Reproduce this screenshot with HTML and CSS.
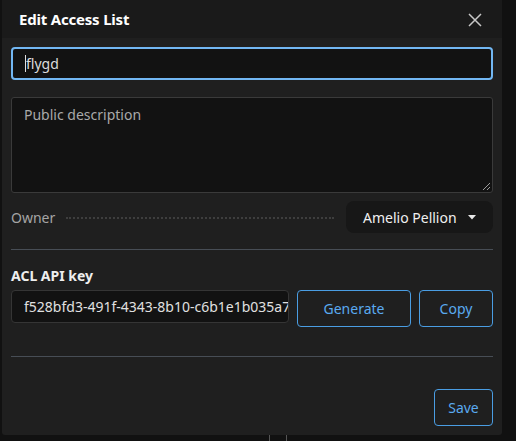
FILE: index.html
```html
<!DOCTYPE html>
<html>
<head>
<meta charset="utf-8">
<link rel="stylesheet" href="styles.css">
</head>
<body>
<div class="backdrop">
  <div class="modal">
    <div class="header">
      <h1 class="title">Edit Access List</h1>
      <button class="close" aria-label="Close">
        <svg width="14" height="14" viewBox="0 0 14 14"><path d="M1 1L13 13M13 1L1 13" stroke="#c8c8c8" stroke-width="1.5" fill="none"/></svg>
      </button>
    </div>
    <div class="body">
      <div class="name-input"><span class="caret"></span>flygd</div>
      <div class="textarea"><span class="placeholder">Public description</span>
        <svg class="grip" width="9" height="9" viewBox="0 0 9 9"><path d="M8 1L1 8M8 5L5 8" stroke="#9a9a9a" stroke-width="1"/></svg>
      </div>
      <div class="owner-row">
        <span class="owner-label">Owner</span>
        <span class="dots"></span>
        <button class="owner-select">Amelio Pellion<svg width="10" height="6" viewBox="0 0 10 6"><path d="M1 1H9L5 5.5Z" fill="#e8e8e8"/></svg></button>
      </div>
      <div class="divider"></div>
      <div class="section-title">ACL API key</div>
      <div class="key-row">
        <div class="key-input">f528bfd3-491f-4343-8b10-c6b1e1b035a7</div>
        <button class="btn btn-gen">Generate</button>
        <button class="btn btn-copy">Copy</button>
      </div>
      <div class="divider divider2"></div>
      <div class="footer">
        <button class="btn btn-save">Save</button>
      </div>
    </div>
  </div>
  <div class="under">
    <span class="under-line"></span><span class="under-line"></span>
  </div>
</div>
</body>
</html>
```

FILE: styles.css
```css
* { box-sizing: border-box; }
html, body { margin: 0; padding: 0; background: #111111; }
body { width: 516px; height: 441px; overflow: hidden; font-family: "Noto Sans", "Open Sans", sans-serif; color: #e0e0e0; }
.backdrop { width: 516px; height: 441px; background: #111111; position: relative; }
.modal { margin-left: 2px; width: 500px; height: 435px; background: #1f1f1f; border-radius: 0 0 3px 3px; display: flex; flex-direction: column; }
.header { height: 38px; background: #1a1a1a; display: flex; align-items: center; justify-content: space-between; padding: 0 20px 0 17px; }
.title { margin: 0; font-size: 15px; font-weight: 700; color: #ffffff; letter-spacing: -0.2px; }
.close { background: none; border: 0; padding: 0; display: flex; margin-top: 2px; }
.body { padding: 9px 9px 0 9px; display: flex; flex-direction: column; }
.name-input { height: 33px; border: 2px solid #72b7f3; border-radius: 4px; background: #121212; font-size: 14px; color: #dcdcdc; display: flex; align-items: center; padding-left: 12px; }
.caret { display: inline-block; width: 1px; height: 17px; background: #e0e0e0; margin-right: 0; }
.textarea { margin-top: 17px; height: 96px; border: 1px solid #3a3a3a; border-radius: 3px; background: #121212; position: relative; padding: 7px 12px; font-size: 14px; }
.placeholder { color: #a9a9a9; }
.grip { position: absolute; right: 1px; bottom: 1px; }
.owner-row { display: flex; align-items: center; margin-top: 8px; height: 32px; }
.owner-label { font-size: 14px; color: #a5a5a5; }
.dots { flex: 1; height: 0; border-top: 2px dotted #3e3e3e; margin: 2px 12px 0 11px; }
.owner-select { width: 147px; height: 32px; background: #171717; border: 0; border-radius: 8px; color: #f0f0f0; font-family: inherit; font-size: 14px; display: flex; align-items: center; justify-content: space-between; padding: 0 16px 0 17px; }
.divider { height: 1px; background: #474d55; margin-top: 16px; }
.section-title { margin-top: 16px; font-size: 14px; font-weight: 700; color: #eeeeee; line-height: 20px; }
.key-row { display: flex; margin-top: 4px; gap: 8px; align-items: flex-start; }
.key-input { width: 278px; height: 33px; border: 1px solid #353535; border-radius: 4px; background: #121212; font-size: 14px; color: #e0e0e0; padding: 0 0 0 12px; display: flex; align-items: center; white-space: nowrap; overflow: hidden; }
.btn { background: transparent; border: 1px solid #4a9de2; border-radius: 4px; color: #5aaaf0; font-family: inherit; font-size: 14px; height: 37px; padding: 0; }
.btn-gen { width: 114px; }
.btn-copy { width: 74px; }
.divider2 { margin-top: 29px; }
.footer { display: flex; justify-content: flex-end; margin-top: 32px; }
.btn-save { width: 59px; height: 37px; }
.under { position: absolute; left: 269px; top: 435px; display: flex; gap: 16px; }
.under-line { width: 1px; height: 6px; background: #555; }
```
